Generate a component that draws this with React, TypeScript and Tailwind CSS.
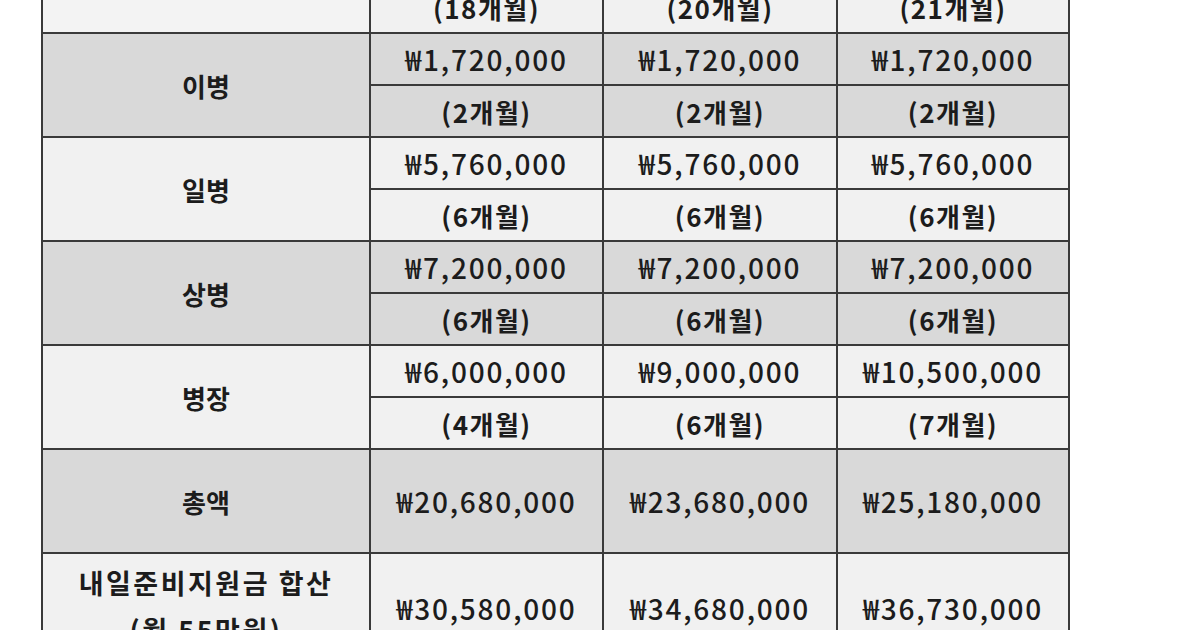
const font = { fontFamily: '"Noto Sans CJK KR", "Noto Sans", sans-serif' }

type Group = {
  label: string
  gray: boolean
  values: [string, string][]
}

const groups: Group[] = [
  {
    label: "이병",
    gray: true,
    values: [
      ["₩1,720,000", "(2개월)"],
      ["₩1,720,000", "(2개월)"],
      ["₩1,720,000", "(2개월)"],
    ],
  },
  {
    label: "일병",
    gray: false,
    values: [
      ["₩5,760,000", "(6개월)"],
      ["₩5,760,000", "(6개월)"],
      ["₩5,760,000", "(6개월)"],
    ],
  },
  {
    label: "상병",
    gray: true,
    values: [
      ["₩7,200,000", "(6개월)"],
      ["₩7,200,000", "(6개월)"],
      ["₩7,200,000", "(6개월)"],
    ],
  },
  {
    label: "병장",
    gray: false,
    values: [
      ["₩6,000,000", "(4개월)"],
      ["₩9,000,000", "(6개월)"],
      ["₩10,500,000", "(7개월)"],
    ],
  },
]

function Cell({
  children,
  gray,
  className = "",
}: {
  children?: React.ReactNode
  gray: boolean
  className?: string
}) {
  return (
    <div
      className={`flex items-center justify-center text-[#1c1c1c] ${
        gray ? "bg-[#d9d9d9]" : "bg-[#f1f1f1]"
      } ${className}`}
    >
      {children}
    </div>
  )
}

const money = "text-[28px] font-medium tracking-[1.8px]"
const month = "text-[26px] font-bold tracking-[1.5px]"

export default function App() {
  return (
    <div className="w-[1200px] h-[630px] overflow-hidden bg-white" style={font}>
      <div className="ml-[41px] mt-[-18px] w-[1029px] grid grid-cols-[326px_231px_232px_230px] gap-[2px] bg-[#3a3a3a] px-[2px]">
        {/* tail of the previous group */}
        <Cell gray={false} className="h-[50px] bg-[#f3f3f3]" />
        {["(18개월)", "(20개월)", "(21개월)"].map((t) => (
          <Cell key={t} gray={false} className={`h-[50px] ${month}`}>
            {t}
          </Cell>
        ))}

        {groups.map((g) => (
          <Group key={g.label} g={g} />
        ))}

        <Cell gray className="h-[102px] text-[26px] font-bold">
          총액
        </Cell>
        {["₩20,680,000", "₩23,680,000", "₩25,180,000"].map((v) => (
          <Cell key={v} gray className={`h-[102px] ${money}`}>
            {v}
          </Cell>
        ))}

        <Cell
          gray={false}
          className="h-[108px] flex-col text-[27px] font-bold tracking-[2.5px] leading-[47px] pb-[4px]"
        >
          <span>내일준비지원금 합산</span>
          <span>(월 55만원)</span>
        </Cell>
        {["₩30,580,000", "₩34,680,000", "₩36,730,000"].map((v) => (
          <Cell key={v} gray={false} className={`h-[108px] ${money}`}>
            {v}
          </Cell>
        ))}
      </div>
    </div>
  )
}

function Group({ g }: { g: Group }) {
  return (
    <>
      <Cell gray={g.gray} className="row-span-2 text-[26px] font-bold">
        {g.label}
      </Cell>
      {g.values.map(([v], i) => (
        <Cell key={"v" + i} gray={g.gray} className={`h-[50px] ${money}`}>
          {v}
        </Cell>
      ))}
      {g.values.map(([, m], i) => (
        <Cell key={"m" + i} gray={g.gray} className={`h-[50px] ${month}`}>
          {m}
        </Cell>
      ))}
    </>
  )
}
